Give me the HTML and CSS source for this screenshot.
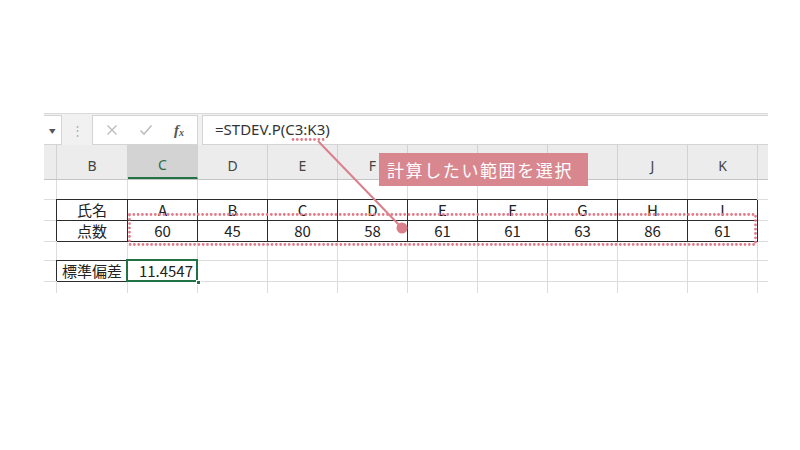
FILE: index.html
```html
<!DOCTYPE html>
<html lang="ja">
<head>
<meta charset="utf-8">
<link rel="stylesheet" href="styles.css">
</head>
<body>
<div class="sheet">
  <div class="fbar">
    <div class="namebox"><span class="drop">▾</span></div>
    <div class="grip">⋮</div>
    <div class="fxbox">
      <svg class="ic x" width="12" height="12" viewBox="0 0 12 12"><path d="M1.5 1.5 L10.5 10.5 M10.5 1.5 L1.5 10.5"/></svg>
      <svg class="ic ok" width="14" height="12" viewBox="0 0 14 12"><path d="M1.5 6.5 L5 10 L12.5 1.5"/></svg>
      <span class="fx">f<sub>x</sub></span>
    </div>
    <div class="input">=STDEV.P(C3:K3)</div>
  </div>
  <div class="hdr">
    <div class="hc"></div>
    <div class="hc">B</div>
    <div class="hc on">C</div>
    <div class="hc">D</div>
    <div class="hc">E</div>
    <div class="hc">F</div>
    <div class="hc">G</div>
    <div class="hc">H</div>
    <div class="hc">I</div>
    <div class="hc">J</div>
    <div class="hc">K</div>
    <div class="hc end"></div>
  </div>
  <div class="grid">
    <!-- row 1 -->
    <div class="c rn r1"></div><div class="c r1"></div><div class="c r1"></div><div class="c r1"></div><div class="c r1"></div><div class="c r1"></div><div class="c r1"></div><div class="c r1"></div><div class="c r1"></div><div class="c r1"></div><div class="c r1"></div><div class="c end r1"></div>
    <!-- row 2 -->
    <div class="c rn r2"></div><div class="c t r2">氏名</div><div class="c t r2">A</div><div class="c t r2">B</div><div class="c t r2">C</div><div class="c t r2">D</div><div class="c t r2">E</div><div class="c t r2">F</div><div class="c t r2">G</div><div class="c t r2">H</div><div class="c t r2">I</div><div class="c end r2"></div>
    <!-- row 3 -->
    <div class="c rn r3"></div><div class="c t r3">点数</div><div class="c t r3">60</div><div class="c t r3">45</div><div class="c t r3">80</div><div class="c t r3">58</div><div class="c t r3">61</div><div class="c t r3">61</div><div class="c t r3">63</div><div class="c t r3">86</div><div class="c t r3">61</div><div class="c end r3"></div>
    <!-- row 4 -->
    <div class="c rn r4"></div><div class="c r4"></div><div class="c r4"></div><div class="c r4"></div><div class="c r4"></div><div class="c r4"></div><div class="c r4"></div><div class="c r4"></div><div class="c r4"></div><div class="c r4"></div><div class="c r4"></div><div class="c end r4"></div>
    <!-- row 5 -->
    <div class="c rn r5"></div><div class="c t r5">標準偏差</div><div class="c sel r5">11.4547</div><div class="c r5"></div><div class="c r5"></div><div class="c r5"></div><div class="c r5"></div><div class="c r5"></div><div class="c r5"></div><div class="c r5"></div><div class="c r5"></div><div class="c end r5"></div>
    <!-- row 6 -->
    <div class="c rn r6"></div><div class="c r6"></div><div class="c r6"></div><div class="c r6"></div><div class="c r6"></div><div class="c r6"></div><div class="c r6"></div><div class="c r6"></div><div class="c r6"></div><div class="c r6"></div><div class="c r6"></div><div class="c end r6"></div>
  </div>
</div>

<svg class="marks" width="800" height="450" viewBox="0 0 800 450">
  <line x1="293" y1="139.5" x2="327" y2="139.5" class="dots"/>
  <rect x="129.5" y="214.5" width="626" height="30" class="dots"/>
  <line x1="318" y1="141" x2="402" y2="228" class="arrow"/>
  <circle cx="402" cy="228" r="5.5" class="dot"/>
</svg>
<div class="label">計算したい範囲を選択</div>
</body>
</html>
```
FILE: styles.css
```css
html, body {
  margin: 0;
  padding: 0;
  background: #ffffff;
}
body {
  width: 800px;
  height: 450px;
  position: relative;
  overflow: hidden;
  font-family: "Noto Sans", "Noto Sans CJK JP", sans-serif;
}
.sheet {
  margin: 113px 0 0 44px;
  width: 724px;
}
.fbar {
  height: 32px;
  box-sizing: border-box;
  border-top: 1px solid #dadada;
  padding-top: 1px;
  background: #f1f1f1;
  display: flex;
  align-items: stretch;
}
.namebox {
  width: 18px;
  height: 30px;
  box-sizing: border-box;
  background: #fff;
  border: 1px solid #d4d4d4;
  border-left: none;
  display: flex;
  align-items: center;
  justify-content: center;
}
.drop {
  font-size: 10px;
  color: #555;
  transform: scaleX(1.3);
}
.grip {
  width: 30px;
  display: flex;
  align-items: center;
  justify-content: center;
  color: #b0b0b0;
  font-size: 13px;
}
.fxbox {
  width: 106px;
  height: 30px;
  box-sizing: border-box;
  background: #fff;
  border: 1px solid #d4d4d4;
  display: flex;
  align-items: center;
  padding-left: 13px;
}
.ic {
  fill: none;
  stroke: #bdbdbd;
  stroke-width: 1.4;
}
.ic.ok {
  margin-left: 21px;
  stroke-width: 1.6;
}
.fx {
  margin-left: 21px;
  font-family: "Liberation Serif", serif;
  font-style: italic;
  font-weight: bold;
  color: #555;
  font-size: 15px;
}
.fx sub {
  font-size: 10px;
  vertical-align: -1px;
}
.input {
  margin-left: 4px;
  flex: 1;
  height: 30px;
  box-sizing: border-box;
  background: #fff;
  border: 1px solid #d4d4d4;
  border-right: none;
  padding-left: 12px;
  font-size: 15px;
  line-height: 27px;
  color: #333;
}
.hdr,
.grid {
  display: grid;
  grid-template-columns: 13px 71px repeat(9, 70px) 10px;
}
.hdr {
  height: 35px;
  box-sizing: border-box;
  background: #ececec;
  border-bottom: 1px solid #c4c4c4;
}
.hc {
  box-sizing: border-box;
  border-right: 1px solid #d2d2d2;
  display: flex;
  align-items: center;
  justify-content: center;
  padding-top: 6px;
  font-size: 14px;
  color: #444;
}
.hc.end {
  border-right: none;
}
.hc.on {
  background: #d3d3d3;
  border-bottom: 2px solid #217346;
  color: #2f6b49;
}
.grid {
  grid-template-rows: 20px 21px 21px 19px 21px 11px;
}
.c {
  box-sizing: border-box;
  border-right: 1px solid #dcdcdc;
  border-bottom: 1px solid #dcdcdc;
  font-family: "Noto Sans CJK JP", sans-serif;
  font-size: 15px;
  line-height: 19px;
  color: #222;
  text-align: center;
}
.c.end {
  border-right: none;
}
.c.r6 {
  border-bottom: none;
}
.c.t {
  border-right-color: #2b2b2b;
  border-bottom-color: #2b2b2b;
  box-shadow: -1px -1px 0 #2b2b2b;
}
.c.sel {
  position: relative;
  text-align: right;
  padding-right: 4px;
}
.c.sel::after {
  content: "";
  position: absolute;
  left: -2px;
  top: -2px;
  right: -1px;
  bottom: -1px;
  border: 2px solid #217346;
}
.c.sel::before {
  content: "";
  position: absolute;
  right: -4px;
  bottom: -4px;
  width: 5px;
  height: 5px;
  background: #217346;
  border: 1px solid #fff;
  box-sizing: border-box;
  z-index: 2;
}
.marks {
  position: absolute;
  left: 0;
  top: 0;
  pointer-events: none;
}
.dots {
  fill: none;
  stroke: #e27b89;
  stroke-width: 2.8;
  stroke-dasharray: 0 4.3;
  stroke-linecap: round;
}
.arrow {
  stroke: #d9808a;
  stroke-width: 2;
}
.dot {
  fill: #d9808a;
}
.label {
  position: absolute;
  left: 379px;
  top: 153px;
  width: 209px;
  height: 33px;
  box-sizing: border-box;
  background: #d9878f;
  color: #fff;
  font-family: "Noto Sans CJK JP", sans-serif;
  font-size: 17px;
  letter-spacing: 1.6px;
  line-height: 33px;
  padding-left: 8px;
  white-space: nowrap;
}
```
